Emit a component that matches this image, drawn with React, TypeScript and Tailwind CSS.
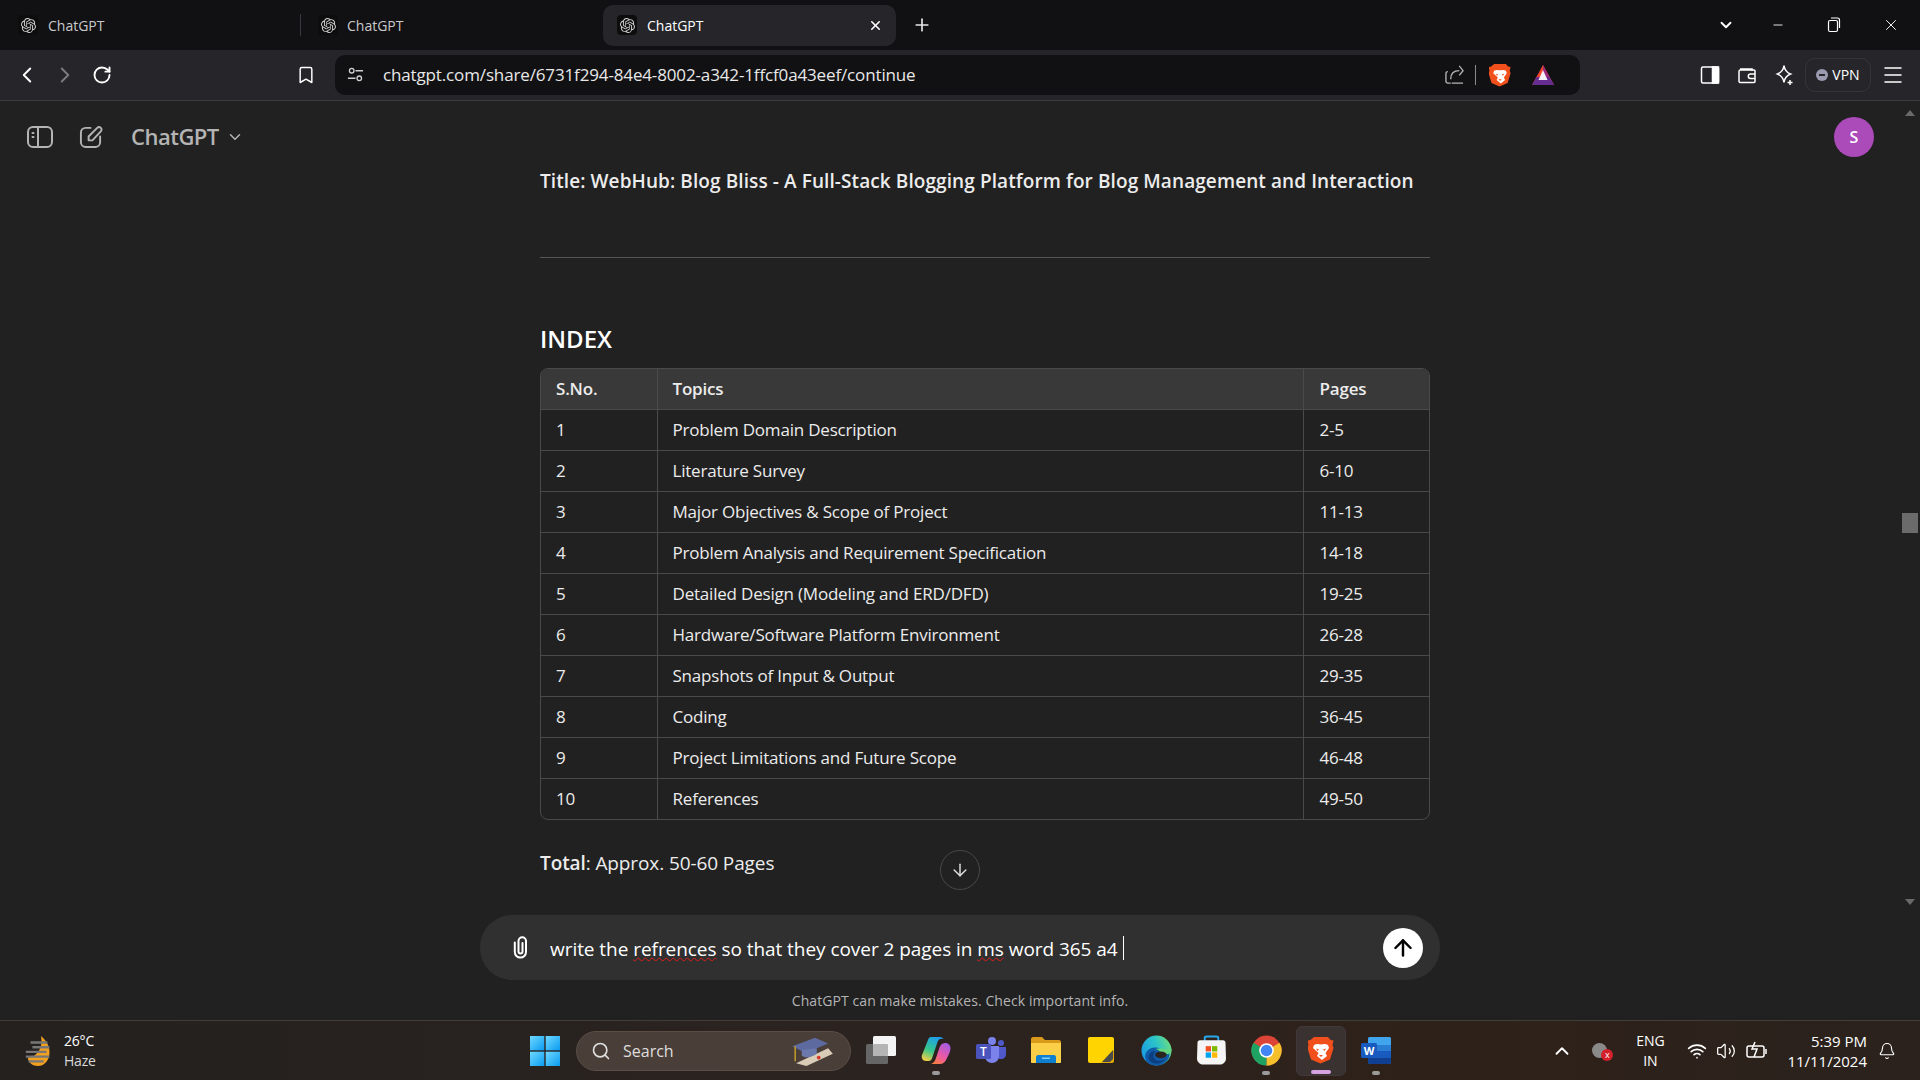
import {
  ArrowDown,
  ArrowUp,
  Bell,
  Bookmark,
  ChevronDown,
  ChevronLeft,
  ChevronRight,
  ChevronUp,
  Menu,
  Minus,
  Plus,
  RotateCw,
  Search,
  Volume2,
  Wifi,
  X,
} from "lucide-react";
import { SiOpenai } from "react-icons/si";

const rows = [
  ["1", "Problem Domain Description", "2-5"],
  ["2", "Literature Survey", "6-10"],
  ["3", "Major Objectives & Scope of Project", "11-13"],
  ["4", "Problem Analysis and Requirement Specification", "14-18"],
  ["5", "Detailed Design (Modeling and ERD/DFD)", "19-25"],
  ["6", "Hardware/Software Platform Environment", "26-28"],
  ["7", "Snapshots of Input & Output", "29-35"],
  ["8", "Coding", "36-45"],
  ["9", "Project Limitations and Future Scope", "46-48"],
  ["10", "References", "49-50"],
];

function TabLogo() {
  return (
    <span className="flex h-[20px] w-[20px] items-center justify-center rounded-[4px] bg-[#0d0d0d]">
      <SiOpenai className="h-[15px] w-[15px] text-[#d0d0d0]" />
    </span>
  );
}

function TabBar() {
  return (
    <div className="flex h-[50px] items-center bg-[#111113] text-[14px] text-[#c9c9cc]">
      <div className="flex w-[300px] items-center gap-[10px] pl-[18px]">
        <TabLogo />
        ChatGPT
      </div>
      <div className="flex h-[22px] w-[303px] items-center gap-[9px] border-l border-[#3a3a3e] pl-[17px]">
        <TabLogo />
        ChatGPT
      </div>
      <div className="flex h-[41px] w-[293px] items-center gap-[10px] rounded-[10px] bg-[#26262a] pl-[14px] pr-[13px] text-white">
        <TabLogo />
        ChatGPT
        <X className="ml-auto h-[15px] w-[15px]" strokeWidth={2.5} />
      </div>
      <Plus className="ml-[16px] h-[20px] w-[20px] text-[#e6e6e6]" strokeWidth={2} />
      <div className="ml-auto flex items-center text-white">
        <ChevronDown className="mr-[36px] h-[18px] w-[18px]" strokeWidth={2.5} />
        <Minus className="mr-[42px] h-[14px] w-[14px]" strokeWidth={1.5} />
        <svg viewBox="0 0 14 16" className="mr-[41px] h-[16px] w-[14px]" fill="none" stroke="currentColor" strokeWidth="1.2">
          <rect x="1.5" y="3.5" width="9" height="11" rx="1.5" />
          <path d="M4 1h6.5A2 2 0 0 1 12.5 3v8" />
        </svg>
        <X className="mr-[20px] h-[18px] w-[18px]" strokeWidth={1.25} />
      </div>
    </div>
  );
}

function BraveLogo({ className }: { className: string }) {
  return (
    <svg viewBox="0 0 26 28" className={className}>
      <path d="M6 1h14l2.500 3 3 .5-1 4.500 1 3-3.500 11.500-9.500 4-9.500-4L-.5 12l1-3-1-4.500 3-.5Z" fill="#f1501c" />
      <path d="M6 9c2.500-1.500 5-1 7-.5 2-.5 4.500-1 7 .5l1 3-3.500 5 1.500 3-5 4-5-4 1.500-3L5 12Z" fill="#ffffff" />
      <path d="M8 12.500l3 1-1.500 1.500ZM18 12.500l-3 1 1.500 1.500ZM11 19h4l-2 2Z" fill="#f1501c" />
    </svg>
  );
}

function AddressBar() {
  return (
    <div className="flex h-[40px] w-[1245px] items-center rounded-[10px] bg-[#111113] pl-[12px] text-white">
      <svg viewBox="0 0 18 18" className="h-[17px] w-[17px] text-[#d0d0d0]" fill="none" stroke="currentColor" strokeWidth="1.4">
        <circle cx="5" cy="5" r="2.4" />
        <path d="M9 5h8M1 13h8" />
        <circle cx="13" cy="13" r="2.4" />
      </svg>
      <span className="ml-[19px] text-[17px] tracking-[-0.14px] text-[#e8e8e8]">
        chatgpt.com/share/6731f294-84e4-8002-a342-1ffcf0a43eef/continue
      </span>
      <div className="ml-auto mr-[26px] flex items-center">
        <svg viewBox="0 0 20 22" className="h-[21px] w-[19px] text-[#b5b5b5]" fill="none" stroke="currentColor" strokeWidth="1.4">
          <path d="M6 20h-3a2 2 0 0 1-2-2v-8a2 2 0 0 1 2-2M19 20H7" />
          <path d="M6 16c0-6 3-9 9-9M15 2l4 5-4 5" />
        </svg>
        <span className="ml-[11px] mr-[13px] h-[20px] w-px bg-[#8a8a8a]" />
        <BraveLogo className="h-[24px] w-[22px]" />
        <svg viewBox="0 0 22 20" className="ml-[21px] h-[20px] w-[22px]">
          <path d="M11 0 22 20H0Z" fill="#f0472c" />
          <path d="M11 0 22 20H11Z" fill="#9a2a7e" />
          <path d="M4.500 12H17.500L22 20H0Z" fill="#662d91" />
          <path d="M11 5 15.500 15H6.500Z" fill="#f6f0f8" />
        </svg>
      </div>
    </div>
  );
}

function Toolbar() {
  return (
    <div className="flex h-[51px] items-center border-b border-[#393940] bg-[#26262a] pb-[1px] text-white">
      <ChevronLeft className="ml-[14px] h-[26px] w-[26px]" strokeWidth={1.75} />
      <ChevronRight className="ml-[12px] h-[26px] w-[26px] text-[#7c7c80]" strokeWidth={1.75} />
      <RotateCw className="ml-[14px] h-[20px] w-[20px]" strokeWidth={2.25} />
      <Bookmark className="ml-[184px] h-[20px] w-[20px]" strokeWidth={1.75} />
      <div className="ml-[19px]">
        <AddressBar />
      </div>
      <svg viewBox="0 0 20 20" className="ml-[120px] h-[20px] w-[20px]" fill="none" stroke="currentColor" strokeWidth="1.5">
        <rect x="1.5" y="2" width="17" height="16" rx="1.5" />
        <rect x="12.5" y="2" width="6" height="16" fill="currentColor" />
      </svg>
      <svg viewBox="0 0 20 20" className="ml-[17px] h-[20px] w-[20px]" fill="none" stroke="currentColor" strokeWidth="1.5">
        <path d="M3 4h12v2M2 6.5a1.5 1.5 0 0 1 1.5-1.5H17a1 1 0 0 1 1 1v10.5a1 1 0 0 1-1 1H3.5A1.5 1.5 0 0 1 2 16.5Z" />
        <path d="M18 9h-4.5a2.2 2.2 0 0 0 0 4.4H18" />
      </svg>
      <svg viewBox="0 0 20 22" className="ml-[17px] h-[22px] w-[20px]" fill="none" stroke="currentColor" strokeWidth="1.5">
        <path d="M10 1.500c.6 4.500 2.500 7 6.500 8.500-4 1.500-5.900 4-6.500 8.500-.6-4.500-2.500-7-6.500-8.500 4-1.500 5.900-4 6.500-8.500Z" />
        <path d="M16 16v5M13.500 18.500h5" />
      </svg>
      <div className="ml-[11px] flex h-[34px] w-[66px] items-center justify-center gap-[4px] rounded-[10px] border border-[#34343a] text-[14px]">
        <span className="flex h-[12px] w-[12px] items-center justify-center rounded-full bg-[#9a9ab0]">
          <span className="h-[2px] w-[6px] bg-[#26262a]" />
        </span>
        VPN
      </div>
      <Menu className="ml-[10px] h-[24px] w-[24px]" strokeWidth={1.5} />
    </div>
  );
}

function Content() {
  return (
    <div className="ml-[540px] w-[890px] text-[#ececec]">
      <p className="mt-[3px] h-[26px] text-[19px] font-semibold leading-[26px] tracking-[0.09px]">
        Title: WebHub: Blog Bliss - A Full-Stack Blogging Platform for Blog Management and Interaction
      </p>
      <hr className="mt-[63px] border-[#555555]" />
      <h2 className="mt-[65px] h-[32px] text-[24px] font-semibold leading-[32px] text-white">INDEX</h2>
      <div className="mt-[13px] overflow-hidden rounded-[8px] border border-[#4a4a4a]">
        <table className="w-full table-fixed border-collapse text-left text-[17px] leading-[24px] tracking-[-0.2px]">
          <thead className="bg-[#393939]">
            <tr className="h-[40px]">
              <th className="w-[116px] pl-[15px] pt-[1px] font-semibold">S.No.</th>
              <th className="border-l border-[#4a4a4a] pl-[15px] pt-[1px] font-semibold">Topics</th>
              <th className="w-[126px] border-l border-[#4a4a4a] pl-[16px] pt-[1px] font-semibold">Pages</th>
            </tr>
          </thead>
          <tbody>
            {rows.map(([no, topic, pages]) => (
              <tr key={no} className="h-[41px] border-t border-[#4a4a4a]">
                <td className="pl-[15px]">{no}</td>
                <td className="border-l border-[#4a4a4a] pl-[15px]">{topic}</td>
                <td className="border-l border-[#4a4a4a] pl-[16px]">{pages}</td>
              </tr>
            ))}
          </tbody>
        </table>
      </div>
      <p className="mt-[30px] text-[19px] leading-[26px] tracking-[-0.1px]">
        <strong className="font-semibold">Total</strong>: Approx. 50-60 Pages
      </p>
    </div>
  );
}

function Composer() {
  return (
    <div className="mx-auto flex h-[65px] w-[960px] items-center rounded-[32px] bg-[#303030] pl-[32px] pr-[17px] text-white">
      <svg viewBox="0 0 17 23" className="h-[23px] w-[17px]" fill="none" stroke="currentColor" strokeWidth="2" strokeLinecap="round">
        <path d="M10.500 7V15.500a2 2 0 0 1-4 0V5a3.700 3.700 0 0 1 7.500 0V16a5.600 5.600 0 0 1-11.200 0V6.500" />
      </svg>
      <span className="ml-[21px] pt-[3px] text-[19px] tracking-[-0.05px]">
        write the{" "}
        <span className="underline decoration-[#e01b1b] decoration-wavy decoration-1">refrences</span> so that they cover 2 pages in{" "}
        <span className="underline decoration-[#e01b1b] decoration-wavy decoration-1">ms</span> word 365 a4
      </span>
      <span className="ml-[5px] h-[24px] w-px bg-white" />
      <span className="ml-auto flex h-[40px] w-[40px] items-center justify-center rounded-full bg-white text-black">
        <ArrowUp className="h-[26px] w-[26px]" strokeWidth={2.25} />
      </span>
    </div>
  );
}

function WinLogo() {
  return (
    <svg viewBox="0 0 30 30" className="h-[30px] w-[30px]">
      <defs>
        <linearGradient id="win" x1="0" y1="0" x2="1" y2="1">
          <stop offset="0" stopColor="#6fd8ff" />
          <stop offset="1" stopColor="#0a9cf0" />
        </linearGradient>
      </defs>
      <rect x="0" y="0" width="14.300" height="14.300" fill="url(#win)" />
      <rect x="15.700" y="0" width="14.300" height="14.300" fill="url(#win)" />
      <rect x="0" y="15.700" width="14.300" height="14.300" fill="url(#win)" />
      <rect x="15.700" y="15.700" width="14.300" height="14.300" fill="url(#win)" />
    </svg>
  );
}

function TaskIcon({ children, dot, active }: { children: React.ReactNode; dot?: boolean; active?: boolean }) {
  return (
    <div className={`relative flex h-[50px] w-[50px] items-center justify-center rounded-[6px] pb-[1px] ${active ? "border border-[#40383a] bg-[#3a3230]" : ""}`}>
      {children}
      {dot && <span className="absolute bottom-[1px] h-[4px] w-[8px] rounded-full bg-[#9a9a9a]" />}
      {active && <span className="absolute bottom-[1px] h-[4px] w-[20px] rounded-full bg-[#d6a3e0]" />}
    </div>
  );
}

function Taskbar() {
  return (
    <div className="flex h-[60px] items-center border-t border-[#413c38] bg-[linear-gradient(90deg,#24211f_0%,#2b2320_45%,#2e2119_75%,#2b221d_100%)] text-[14px] text-white">
      {/* weather */}
      <div className="flex w-[517px] items-center pl-[24px]">
        <svg viewBox="0 0 30 34" className="h-[32px] w-[30px]">
          <path d="M17 1c7 6 10 12 9 20-1 7-6 12-12 12S4 30 3 24C12 24 20 14 17 1Z" fill="#f4a01f" />
          <path d="M6 8h18M8 13h18M1 18h22M1 23h25M4 28h16" stroke="#777" strokeWidth="2.500" />
        </svg>
        <div className="ml-[10px] leading-[20px] tracking-[-0.2px]">
          <div>26°C</div>
          <div className="text-[#d8d8d8]">Haze</div>
        </div>
      </div>
      <div className="flex w-[55px] justify-center">
        <WinLogo />
      </div>
      <div className="ml-[4px] flex h-[40px] w-[275px] items-center rounded-full border border-[#5a4e46] bg-[#4a3f38] pl-[14px] pr-[12px] text-[16px] text-[#dedede]">
        <Search className="h-[20px] w-[20px]" strokeWidth={2} />
        <span className="ml-[12px]">Search</span>
        <svg viewBox="0 0 50 34" className="ml-auto h-[32px] w-[48px]">
          <path d="M6 30 40 14l5 6-28 13Z" fill="#d9cdb8" />
          <circle cx="30" cy="24" r="2" fill="#d9352b" />
          <path d="M2 12 26 3l14 6-24 10Z" fill="#5d6aa0" />
          <path d="M12 16v6c5 3 10 2 16-2v-6Z" fill="#6c79ad" />
          <path d="M5 12v16" stroke="#c9a227" strokeWidth="1.500" />
        </svg>
      </div>
      <div className="ml-[5px] flex items-center gap-[5px]">
        <TaskIcon>
          <svg viewBox="0 0 30 28" className="h-[28px] w-[30px]">
            <rect x="0" y="8" width="22" height="20" rx="1.500" fill="#666666" />
            <rect x="7" y="0" width="23" height="20" rx="1.500" fill="#f4f4f4" />
            <rect x="7" y="8" width="15" height="12" rx="1" fill="#b5b5b5" />
          </svg>
        </TaskIcon>
        <TaskIcon dot>
          <svg viewBox="0 0 30 27" className="h-[27px] w-[30px]">
            <defs>
              <linearGradient id="cop" x1="0.6" y1="0" x2="0.2" y2="1">
                <stop offset="0" stopColor="#1f9fe8" />
                <stop offset="0.55" stopColor="#35c78c" />
                <stop offset="1" stopColor="#f7cf45" />
              </linearGradient>
              <linearGradient id="cop2" x1="0.8" y1="0" x2="0.2" y2="1">
                <stop offset="0" stopColor="#a45be6" />
                <stop offset="0.6" stopColor="#ee5aa0" />
                <stop offset="1" stopColor="#f5803a" />
              </linearGradient>
            </defs>
            <path d="M10 0h9c2 0 3 1 3.500 2-3-1-5 0-6 3l-5 15c-1 3-2 4-4 4H5c-3 0-5-3-4-6L7 3c.6-2 1.500-3 3-3Z" fill="url(#cop)" />
            <path d="M24 6c3 0 5.500 2 5.500 5 0 2-.5 4-1.500 6l-3 6c-1 2-3 4-6 4H10c3-1 4-3 5-6l3-9c1-4 3-6 6-6Z" fill="url(#cop2)" />
          </svg>
        </TaskIcon>
        <TaskIcon>
          <svg viewBox="0 0 30 26" className="h-[26px] w-[30px]">
            <circle cx="16" cy="4" r="4" fill="#7b83eb" />
            <circle cx="25" cy="6" r="3" fill="#5059c9" />
            <path d="M20 10h10v7c0 3-2 5-5 5s-5-2-5-5Z" fill="#5059c9" />
            <path d="M9 9h14v10c0 4-3 7-7 7s-7-3-7-7Z" fill="#7b83eb" />
            <rect x="0" y="7" width="15" height="15" rx="1.500" fill="#4b53bc" />
            <text x="7.500" y="19" textAnchor="middle" fill="#fff" fontSize="12" fontWeight="600">T</text>
          </svg>
        </TaskIcon>
        <TaskIcon>
          <svg viewBox="0 0 30 26" className="h-[26px] w-[30px]">
            <path d="M0 2c0-1 1-2 2-2h9l3 3h14c1 0 2 1 2 2v5H0Z" fill="#d99a1c" />
            <path d="M0 6h30v19c0 .6-.4 1-1 1H1c-.6 0-1-.4-1-1Z" fill="#fbcf47" />
            <path d="M5 20c0-1 1-2 2-2h16c1 0 2 1 2 2v6H5Z" fill="#0f7fd0" />
            <rect x="11" y="20.500" width="8" height="1.500" fill="#7fd0f5" />
          </svg>
        </TaskIcon>
        <TaskIcon>
          <svg viewBox="0 0 26 26" className="h-[26px] w-[26px]">
            <path d="M2 0h22a2 2 0 0 1 2 2v15l-9 9H2a2 2 0 0 1-2-2V2a2 2 0 0 1 2-2Z" fill="#ffd400" />
            <path d="M26 13v11a2 2 0 0 1-2 2H13Z" fill="#e0a800" />
            <path d="M25 13v9l-3 3h-8Z" fill="#4a4a4a" />
          </svg>
        </TaskIcon>
        <TaskIcon>
          <svg viewBox="0 0 32 32" className="h-[31px] w-[31px]">
            <defs>
              <linearGradient id="edge" x1="0" y1="0.6" x2="1" y2="0.2">
                <stop offset="0" stopColor="#1b9de2" />
                <stop offset="0.55" stopColor="#2cc4c8" />
                <stop offset="1" stopColor="#72dd78" />
              </linearGradient>
            </defs>
            <circle cx="16" cy="16" r="15.500" fill="url(#edge)" />
            <path d="M29 23c-3 6-9 9-14 8.500C8 31 3 26 4.500 20c1.500-5 6.500-8 11.500-7 3 .6 5 2 5.500 5h8Z" fill="#0f5ba8" />
            <path d="M26 24c-3 4-7 6-11 5.500-5-.5-8-4-7-8 1-3 4-5 7-5-2 2-3 5-1 8 2 3 7 3 12-.5Z" fill="#0b3f7f" />
            <path d="M31.500 15.500c0 3-2.500 4.500-5.500 4.500h-5.500c-.5-3-2.500-5-5.500-5.500 5-1 8 0 11 0 2 0 5-1 5.500.5Z" fill="#5fd67f" />
            <ellipse cx="20.500" cy="20.500" rx="6" ry="3.500" fill="#2b2320" />
          </svg>
        </TaskIcon>
        <TaskIcon>
          <svg viewBox="0 0 30 30" className="h-[30px] w-[29px]">
            <path d="M8 7V2.500C8 1.500 9 1 10 1h10c1 0 2 .5 2 1.500V7" fill="none" stroke="#28a8ea" strokeWidth="2" />
            <path d="M3 5h24c1.500 0 2.500 1 2.500 2.500L30 24c0 3-3 6-6 6H6c-3 0-6-3-6-6L.5 7.500C.5 6 1.500 5 3 5Z" fill="#f5f5f5" />
            <rect x="9" y="11" width="5.500" height="5.500" fill="#f25022" />
            <rect x="15.500" y="11" width="5.500" height="5.500" fill="#7fba00" />
            <rect x="9" y="17.500" width="5.500" height="5.500" fill="#00a4ef" />
            <rect x="15.500" y="17.500" width="5.500" height="5.500" fill="#ffb900" />
          </svg>
        </TaskIcon>
        <TaskIcon dot>
          <svg viewBox="0 0 32 32" className="h-[31px] w-[31px]">
            <circle cx="16" cy="16" r="15.500" fill="#db4437" />
            <path d="M16 16 29.400 8A15.500 15.500 0 0 1 16 31.500Z" fill="#f6c02d" />
            <path d="M16 16 16 31.500A15.500 15.500 0 0 1 2.600 8Z" fill="#1ea362" />
            <circle cx="16" cy="16" r="7.500" fill="#fff" />
            <circle cx="16" cy="16" r="6" fill="#4285f4" />
          </svg>
        </TaskIcon>
        <TaskIcon active>
          <BraveLogo className="h-[28px] w-[26px]" />
        </TaskIcon>
        <TaskIcon dot>
          <svg viewBox="0 0 30 27" className="h-[27px] w-[30px]">
            <rect x="7" y="0" width="23" height="27" rx="2" fill="#2b7cd3" />
            <path d="M7 2a2 2 0 0 1 2-2h19a2 2 0 0 1 2 2v6H7Z" fill="#41a5ee" />
            <rect x="7" y="14" width="23" height="7" fill="#185abd" />
            <path d="M7 21h23v4a2 2 0 0 1-2 2H9a2 2 0 0 1-2-2Z" fill="#103f91" />
            <rect x="0" y="6" width="16" height="15" rx="1.500" fill="#185abd" />
            <text x="8" y="18" textAnchor="middle" fill="#fff" fontSize="11" fontWeight="700">W</text>
          </svg>
        </TaskIcon>
      </div>
      <div className="ml-auto flex items-center pr-[24px]">
        <ChevronUp className="h-[22px] w-[22px]" strokeWidth={2} />
        <div className="relative ml-[18px] h-[20px] w-[22px]">
          <span className="absolute left-[1px] top-[2px] h-[15px] w-[15px] rounded-full bg-[#8a8a8a]" />
          <span className="absolute bottom-0 right-0 flex h-[12px] w-[12px] items-center justify-center rounded-full bg-[#d3202b] text-[9px] leading-none">x</span>
        </div>
        <div className="ml-[20px] w-[34px] text-center text-[14px] leading-[20px]">
          <div>ENG</div>
          <div>IN</div>
        </div>
        <Wifi className="ml-[20px] h-[20px] w-[20px]" strokeWidth={2} />
        <Volume2 className="ml-[9px] h-[20px] w-[20px]" strokeWidth={1.5} />
        <svg viewBox="0 0 22 20" className="ml-[10px] h-[20px] w-[22px]" fill="none" stroke="currentColor" strokeWidth="1.500">
          <rect x="1" y="5" width="17" height="11" rx="2" />
          <path d="M20 8v5" />
          <path d="M9 1 6 8h5l-3 8" />
        </svg>
        <div className="ml-[19px] text-right text-[15px] leading-[20px]">
          <div>5:39 PM</div>
          <div>11/11/2024</div>
        </div>
        <Bell className="ml-[11px] h-[18px] w-[18px]" strokeWidth={1.5} />
      </div>
    </div>
  );
}

export default function App() {
  return (
    <div className="flex h-[1080px] w-[1920px] flex-col overflow-hidden bg-[#212121] font-['Open_Sans',sans-serif]">
      <TabBar />
      <Toolbar />
      <main className="relative flex min-h-0 flex-1 flex-col">
        <header className="flex h-[64px] items-center pt-[7px] text-[#b4b4b4]">
          <svg viewBox="0 0 26 22" className="ml-[27px] h-[22px] w-[26px]" fill="none" stroke="currentColor" strokeWidth="2">
            <rect x="1" y="1" width="24" height="20" rx="5" />
            <path d="M11 1v20" />
            <path d="M5.500 7h1M5.500 11h1" strokeLinecap="round" />
          </svg>
          <svg viewBox="0 0 25 25" className="ml-[26px] h-[24px] w-[24px]" fill="none" stroke="currentColor" strokeWidth="2" strokeLinejoin="round" strokeLinecap="round">
            <path d="M12 3H7a5 5 0 0 0-5 5v10a5 5 0 0 0 5 5h10a5 5 0 0 0 5-5v-6" />
            <path d="M10 16v-4l9-9a2.600 2.600 0 0 1 3.700 3.700L14 16Z" />
          </svg>
          <span className="ml-[28px] text-[22px] font-semibold tracking-[-0.5px]">ChatGPT</span>
          <ChevronDown className="ml-[7px] h-[18px] w-[18px]" strokeWidth={2} />
          <span className="ml-auto mr-[46px] flex h-[40px] w-[40px] items-center justify-center rounded-full bg-[#ab4ab9] text-[16px] font-semibold text-white">
            S
          </span>
        </header>
        <div className="min-h-0 flex-1 overflow-hidden">
          <Content />
        </div>
        <div className="pb-[9px]">
          <Composer />
          <p className="mt-[11px] text-center text-[14px] leading-[20px] tracking-[0.08px] text-[#b4b4b4]">
            ChatGPT can make mistakes. Check important info.
          </p>
        </div>
        {/* scroll to bottom */}
        <span className="absolute left-[940px] top-[749px] flex h-[40px] w-[40px] items-center justify-center rounded-full border border-[#484848] bg-[#212121] text-[#e0e0e0]">
          <ArrowDown className="h-[20px] w-[20px]" strokeWidth={1.75} />
        </span>
        {/* page scrollbar */}
        <div className="absolute right-0 top-0 flex h-[807px] w-[20px] flex-col items-center">
          <span className="mt-[9px] h-0 w-0 border-x-[5px] border-b-[6px] border-x-transparent border-b-[#6a6a6a]" />
          <span className="mt-[397px] h-[20px] w-[16px] bg-[#6b6b6b]" />
          <span className="mb-[3px] mt-auto h-0 w-0 border-x-[5px] border-t-[6px] border-x-transparent border-t-[#6a6a6a]" />
        </div>
      </main>
      <Taskbar />
    </div>
  );
}
